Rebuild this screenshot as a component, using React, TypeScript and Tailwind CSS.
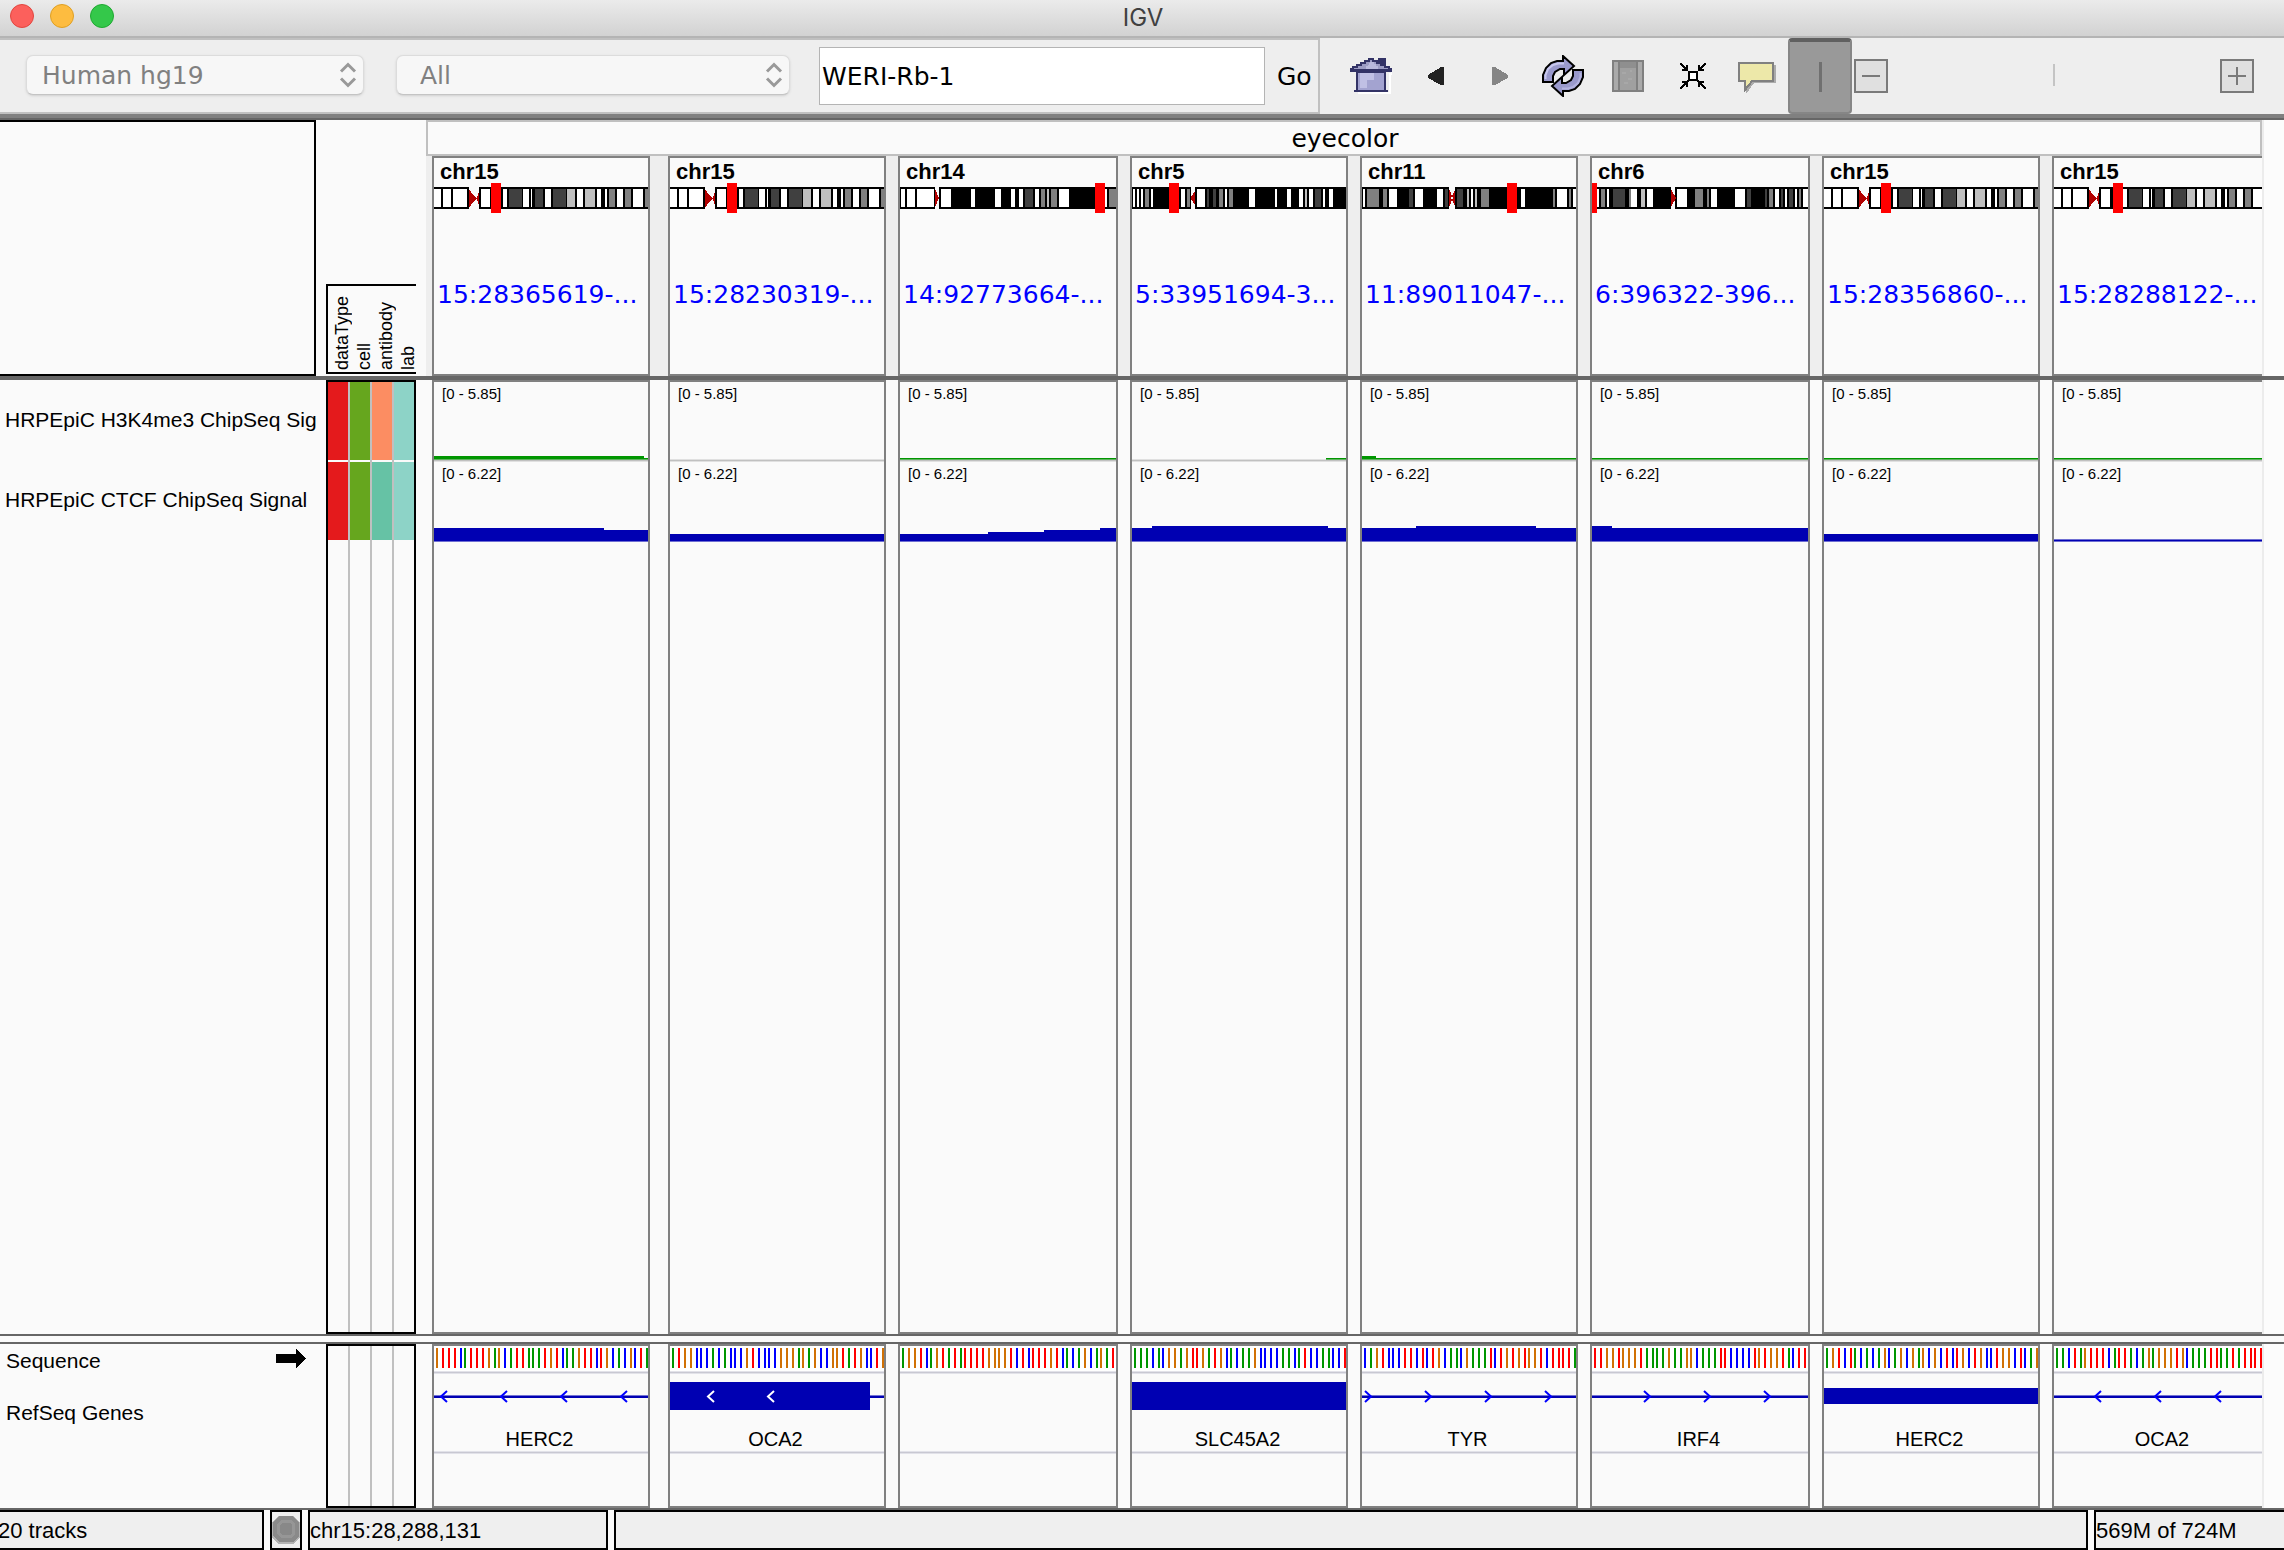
import React from "react";

type Band = [start: number, end: number, shade: string];

type Ideogram = {
  arms: [number, number][];
  centromere: string;
  bands: Band[];
  marker: [number, number];
};

type Gene = {
  name?: string;
  lines: [number, number][];
  block?: { from: number; to: number; height: number };
  direction?: "left" | "right";
  chevrons: number[];
  light?: boolean;
};

type Locus = {
  chr: string;
  locus: string;
  width: number;
  grow: string;
  ideogram: Ideogram;
  sequence: string;
  h3k4me3: [number, number, number][];
  ctcf: [number, number, number][];
  gene: Gene;
};

const W = "#ffffff";
const L = "#bfbfbf";
const G = "#808080";
const D = "#404040";

const chr15Bands: Band[] = [
  [0, 7, W], [9, 17, W], [19, 33, W], [47, 56, W], [69, 73, W], [75, 88, D], [89, 95, W], [97, 98, W],
  [101, 109, D], [111, 117, W], [119, 132, D], [133, 141, L], [143, 149, W], [151, 161, L], [163, 167, W],
  [171, 173, W], [175, 181, G], [183, 189, W], [191, 197, G], [199, 209, W], [211, 214, G],
];

const chr15 = (marker: number): Ideogram => ({
  arms: [[0, 35], [45, 216]],
  centromere: "M35 6L39 12L43 15L39 19L35 25ZM45 9L43 14V17L45 22Z",
  bands: chr15Bands,
  marker: [marker, marker + 10],
});

const chr14: Ideogram = {
  arms: [[0, 35], [39, 216]],
  centromere: "M35 6L39 15L35 24Z",
  bands: [
    [1, 5, W], [7, 15, W], [17, 34, W], [41, 51, W], [71, 75, W], [95, 101, W], [111, 115, W], [119, 123, W],
    [125, 133, D], [135, 139, W], [141, 145, G], [147, 149, L], [151, 157, G], [159, 169, W], [205, 207, W], [209, 216, G],
  ],
  marker: [195, 205],
};

const chr5: Ideogram = {
  arms: [[0, 59], [63, 214]],
  centromere: "M59 10L60 15L59 20ZM63 8L60 13V17L63 22Z",
  bands: [
    [1, 3, W], [5, 7, W], [9, 11, W], [13, 17, G], [19, 21, W], [49, 53, W], [55, 58, G], [65, 73, W], [75, 77, D],
    [81, 84, D], [87, 91, G], [93, 95, W], [97, 101, G], [117, 123, W], [143, 145, W], [155, 159, W], [167, 171, W],
    [173, 175, L], [177, 181, W], [183, 189, D], [191, 193, W], [197, 201, W],
  ],
  marker: [37, 47],
};

const chr11: Ideogram = {
  arms: [[0, 87], [93, 214]],
  centromere: "M87 6L91 15L87 24ZM93 7L89 15L93 23Z",
  bands: [
    [1, 3, W], [5, 17, G], [21, 25, G], [27, 35, W], [47, 51, D], [53, 61, W], [75, 81, W], [83, 86, D], [95, 101, D],
    [105, 107, L], [109, 111, W], [113, 115, L], [119, 127, G], [159, 163, W], [191, 193, G], [195, 205, W],
    [207, 209, G], [211, 214, W],
  ],
  marker: [145, 155],
};

const chr6: Ideogram = {
  arms: [[0, 79], [83, 216]],
  centromere: "M79 6L84 15L79 24Z",
  bands: [
    [5, 7, W], [9, 13, G], [15, 17, W], [21, 33, D], [37, 39, G], [39, 45, W], [49, 53, L], [55, 61, W], [85, 95, W],
    [103, 111, G], [115, 117, G], [119, 125, W], [143, 153, W], [155, 159, D], [173, 175, D], [177, 181, G],
    [183, 187, W], [189, 191, D], [193, 195, W], [197, 201, D], [203, 205, W], [207, 209, G], [211, 216, W],
  ],
  marker: [0, 5],
};

const loci: Locus[] = [
  {
    chr: "chr15", locus: "15:28365619-...", width: 214, grow: "grow-[214] mr-[6px]", ideogram: chr15(57),
    sequence: "GTTTCATTTGAGCATTAAATGTCAAGTTCTGCACGCTA",
    h3k4me3: [[0, 210, 3], [210, 214, 1]],
    ctcf: [[0, 170, 14], [170, 214, 12]],
    gene: { name: "HERC2", lines: [[0, 214]], direction: "left", chevrons: [7, 67, 127, 187] },
  },
  {
    chr: "chr15", locus: "15:28230319-...", width: 214, grow: "grow-[214]", ideogram: chr15(57),
    sequence: "ATGGCCCACACCCGTCCCCGGGAGAGCCGGTATGCCTG",
    h3k4me3: [],
    ctcf: [[0, 214, 8]],
    gene: { name: "OCA2", lines: [[200, 214]], block: { from: 0, to: 200, height: 28 }, direction: "left", chevrons: [38, 98], light: true },
  },
  {
    chr: "chr14", locus: "14:92773664-...", width: 216, grow: "grow-[216]", ideogram: chr14,
    sequence: "AGGTCAGTATATTTTGGGGTCTCTTTGTCACAGCAGAT",
    h3k4me3: [[0, 216, 1]],
    ctcf: [[0, 88, 8], [88, 144, 10], [144, 200, 12], [200, 216, 14]],
    gene: { lines: [], chevrons: [] },
  },
  {
    chr: "chr5", locus: "5:33951694-3...", width: 214, grow: "grow-[214]", ideogram: chr5,
    sequence: "AAACACGGAGTTGATGCACAAGCCCCAACATCCAACCT",
    h3k4me3: [[194, 214, 1]],
    ctcf: [[0, 20, 14], [20, 196, 16], [196, 214, 14]],
    gene: { name: "SLC45A2", lines: [], block: { from: 0, to: 214, height: 28 }, chevrons: [] },
  },
  {
    chr: "chr11", locus: "11:89011047-...", width: 214, grow: "grow-[214]", ideogram: chr11,
    sequence: "CAGTCCCTTCTCTGCAACGAAATCTGTGTGGTCTTTTA",
    h3k4me3: [[0, 14, 3], [14, 214, 1]],
    ctcf: [[0, 54, 14], [54, 174, 16], [174, 214, 14]],
    gene: { name: "TYR", lines: [[0, 214]], direction: "right", chevrons: [9, 69, 129, 189] },
  },
  {
    chr: "chr6", locus: "6:396322-396...", width: 216, grow: "grow-[216]", ideogram: chr6,
    sequence: "TTGGTGGGTAAAAGAAGGCAAATTCCCCTGTGGTACTT",
    h3k4me3: [[0, 216, 1]],
    ctcf: [[0, 20, 16], [20, 216, 14]],
    gene: { name: "IRF4", lines: [[0, 216]], direction: "right", chevrons: [58, 118, 178] },
  },
  {
    chr: "chr15", locus: "15:28356860-...", width: 214, grow: "grow-[214]", ideogram: chr15(57),
    sequence: "AGTCTACACAGCAGCGAGCGCTCTGCTGCCTGGCTCAG",
    h3k4me3: [[0, 214, 1]],
    ctcf: [[0, 214, 8]],
    gene: { name: "HERC2", lines: [], block: { from: 0, to: 214, height: 16 }, chevrons: [] },
  },
  {
    chr: "chr15", locus: "15:28288122-...", width: 208, grow: "grow-[208]", ideogram: chr15(59),
    sequence: "AACTAGTTTCATTACAGAGGGTGCAAATTAATATTTT",
    h3k4me3: [[0, 208, 1]],
    ctcf: [[0, 208, 3]],
    gene: { name: "OCA2", lines: [[0, 208]], direction: "left", chevrons: [41, 101, 161] },
  },
];

const baseColors: Record<string, string> = { A: "#009600", C: "#0000ff", G: "#d17105", T: "#ff0000" };

const attributes = [
  { name: "dataType", first: "bg-[#e41a1c]", second: "bg-[#e41a1c]" },
  { name: "cell", first: "bg-[#66a61e]", second: "bg-[#66a61e]" },
  { name: "antibody", first: "bg-[#fc8d62]", second: "bg-[#66c2a5]" },
  { name: "lab", first: "bg-[#8dd3c7]", second: "bg-[#8dd3c7]" },
];

function Chart({ width, height, className, children }: { width: number; height: number; className: string; children: React.ReactNode }) {
  return (
    <svg className={`block w-full shrink-0 ${className}`} viewBox={`0 0 ${width} ${height}`} preserveAspectRatio="none" shapeRendering="crispEdges" aria-hidden="true">
      {children}
    </svg>
  );
}

function panelClass(locus: Locus, i: number) {
  const right = i === loci.length - 1 ? "" : "border-r-2";
  return `flex min-w-0 basis-0 flex-col overflow-hidden border-y-2 border-l-2 border-[#808080] bg-[#fafafa] ${right} ${locus.grow}`;
}

function Ideo({ locus }: { locus: Locus }) {
  const { arms, centromere, bands, marker } = locus.ideogram;
  return (
    <Chart width={locus.width} height={30} className="h-[30px]">
      {arms.map(([a, b]) => <rect key={a} x={a} y={4} width={b - a} height={22} fill="#000" />)}
      {bands.map(([a, b, c]) => <rect key={a} x={a} y={6} width={b - a} height={18} fill={c} />)}
      <path d={centromere} fill="#b20000" />
      <rect x={marker[0]} y={0} width={marker[1] - marker[0]} height={30} fill="#f00" />
    </Chart>
  );
}

function Separator() {
  return <div className="h-[3px] shrink-0 border-y border-[#e2e2e9] bg-[#c8c8d2]" />;
}

function GeneGlyph({ locus }: { locus: Locus }) {
  const { lines, block, chevrons, direction, light } = locus.gene;
  const back = direction === "left" ? 6 : -6;
  return (
    <Chart width={locus.width} height={48} className="h-12">
      {lines.map(([a, b]) => (
        <g key={a}>
          <rect x={a} y={21} width={b - a} height={3} fill="#7373d4" />
          <rect x={a} y={22} width={b - a} height={2} fill="#0000b2" />
        </g>
      ))}
      {block && <rect x={block.from} y={22 - block.height / 2} width={block.to - block.from} height={block.height} fill="#0000b2" />}
      {chevrons.map((x) => (
        <path key={x} d={`M${x + back} 17L${x} 22.5L${x + back} 28`} fill="none" stroke={light ? "#fff" : "#0000ff"} strokeWidth={2} shapeRendering="auto" />
      ))}
    </Chart>
  );
}

function PaneRow({ className, names, attrs, children }: { className: string; names: React.ReactNode; attrs: React.ReactNode; children: React.ReactNode }) {
  return (
    <div className={`flex bg-[#fafafa] ${className}`}>
      <div className="flex w-[316px] shrink-0 flex-col overflow-hidden">{names}</div>
      <div className="mx-[10px] flex w-[90px] shrink-0 flex-col">{attrs}</div>
      {children}
      <div className="w-[22px] shrink-0 border-l-2 border-[#ececec] bg-[#fcfcfc]" />
    </div>
  );
}

function ToolButton({ label, className, children }: { label: string; className: string; children: React.ReactNode }) {
  return (
    <button type="button" aria-label={label} className={`flex shrink-0 items-center justify-center ${className}`}>
      {children}
    </button>
  );
}

function Picker({ label, value, className, text }: { label: string; value: string; className: string; text: string }) {
  return (
    <div className={`relative h-10 ${className}`}>
      <select
        aria-label={label}
        defaultValue={value}
        className={`block h-full w-full appearance-none rounded-[7px] border border-[#dcdcdc] border-b-[#c4c4c4] bg-[#f7f7f7] text-[25px] leading-[32px] text-[#808080] shadow-sm ${text}`}
      >
        <option>{value}</option>
      </select>
      <svg className="pointer-events-none absolute right-[7px] top-[7px] h-[26px] w-[18px]" viewBox="0 0 18 26" fill="none" stroke="#999" strokeWidth="3" aria-hidden="true">
        <path d="M2 9.500L9 2.500L16 9.500M2 16.500L9 23.500L16 16.500" />
      </svg>
    </div>
  );
}

const refreshArrow = "M1 27V20L4 13L9 8L15 6H21V1L32 11L22 20V14H18L13 17L11 21V27Z";
const refreshShine = "M3.500 24V20L6 14L11 10L16 8.500H22";

function Toolbar() {
  return (
    <div className="flex h-[76px] shrink-0 bg-[#eee]">
      <div className="flex w-[1320px] shrink-0 items-center border-y-2 border-r-2 border-[#c0c0c0] pl-[26px]">
        <Picker label="Genome" value="Human hg19" className="mb-[2px] w-[338px]" text="pl-[15px] pt-[2px]" />
        <Picker label="Chromosome" value="All" className="mb-[2px] ml-8 w-[394px]" text="pl-[23px] pt-[2px]" />
        <input
          aria-label="Locus"
          defaultValue="WERI-Rb-1"
          className="ml-[29px] h-[58px] w-[446px] border border-[#b4b4b4] bg-white px-[2px] text-[25px] text-black outline-none"
        />
        <button type="button" className="ml-3 pt-[2px] text-[25px] leading-[32px]">Go</button>
      </div>
      <ToolButton label="Home" className="ml-[30px] w-[42px]">
        <svg className="h-9 w-[42px]" viewBox="0 0 42 36" shapeRendering="crispEdges">
          <path d="M8 35H40V16H42V12" fill="none" stroke="#fff" strokeWidth="2" />
          <path d="M28 0H36V8H28Z" fill="#333366" />
          <path d="M0 10H2V8H6V6H10V4H14V2H18V0H24V2H28V4H32V6H36V8H40V10H42V14H0Z" fill="#333366" />
          <path d="M4 11H38V10H34V8H30V6H26V4H22V2H20V4H16V6H12V8H8V10H4Z" fill="#9c9cc4" />
          <path d="M20 4H24V6H26V8H28V11H16V8H18Z" fill="#b9b9dc" />
          <path d="M6 14H36V34H6Z" fill="#333366" />
          <path d="M8 15H34V32H8Z" fill="#a3a3d0" />
          <path d="M10 15H24V22H17V30H10Z" fill="#c0c0e4" />
          <path d="M4 32H38V34H4Z" fill="#333366" />
        </svg>
      </ToolButton>
      <ToolButton label="Back" className="ml-9 w-4">
        <svg className="h-[18px] w-4" viewBox="0 0 16 18" shapeRendering="crispEdges"><path d="M16 0V18H13L0 11V8L13 0Z" fill="#222" /></svg>
      </ToolButton>
      <ToolButton label="Forward" className="ml-12 w-4">
        <svg className="h-[18px] w-4" viewBox="0 0 16 18" shapeRendering="crispEdges"><path d="M0 0V18H3L16 11V8L3 0Z" fill="#858585" /></svg>
      </ToolButton>
      <ToolButton label="Refresh" className="ml-[34px] w-[42px]">
        <svg className="h-[42px] w-[42px]" viewBox="0 0 42 42" stroke="#000" strokeWidth="2" fill="#9999cc">
          <path d={refreshArrow} />
          <path d={refreshShine} fill="none" stroke="#c8c8ee" />
          <g transform="rotate(180 21 21)">
            <path d={refreshArrow} />
            <path d={refreshShine} fill="none" stroke="#b3b3e0" />
          </g>
        </svg>
      </ToolButton>
      <ToolButton label="Define region" className="ml-7 w-8">
        <svg className="h-8 w-8" viewBox="0 0 32 32" shapeRendering="crispEdges">
          <path d="M0 0H32V32H0Z" fill="#808080" />
          <path d="M2 2H6V30H2ZM26 2H30V30H26Z" fill="#aaa" />
          <path d="M8 2H24V8H8Z" fill="#8f8f8f" />
          <path d="M8 8H24V30H8Z" fill="#a0a0a0" />
          <path d="M10 12H14V14H10ZM16 18H20V20H16ZM12 22H16V24H12ZM18 10H20V12H18Z" fill="#a8a8a8" />
        </svg>
      </ToolButton>
      <ToolButton label="Collapse" className="ml-9 w-[26px]">
        <svg className="h-[26px] w-[26px]" viewBox="0 0 26 26" shapeRendering="crispEdges" fill="none" stroke="#000" strokeWidth="2">
          <path d="M0 0L8 8M26 0L18 8M0 26L8 18M26 26L18 18" />
          <path d="M7 2V7H2M19 2V7H24M7 24V19H2M19 24V19H24" />
          <rect x="9" y="9" width="8" height="8" fill="#fff" />
        </svg>
      </ToolButton>
      <ToolButton label="Popup text behaviour" className="ml-8 w-[38px] pt-1">
        <svg className="h-8 w-[38px]" viewBox="0 0 38 32" shapeRendering="crispEdges">
          <path d="M3 3H38V21H16L8 32V28Z" fill="#ababab" />
          <path d="M1 1H35V19H14L7 28V19H1Z" fill="#ede8a9" stroke="#808080" strokeWidth="2" />
        </svg>
      </ToolButton>
      <button type="button" aria-label="Center line" aria-pressed="true" className="ml-[12px] flex w-16 shrink-0 items-center justify-center rounded-[4px] border-2 border-t-4 border-[#868686] border-t-[#606060] bg-[#999]">
        <span className="h-[30px] w-[3px] bg-[#707070]" />
      </button>
      <div className="flex min-w-0 flex-1 items-center pl-[2px] pr-[30px]">
        <ToolButton label="Zoom out" className="h-[34px] w-[34px] border-2 border-[#7a7a7a] bg-[#e0e0e0]">
          <span className="h-[2px] w-[18px] bg-[#7a7a7a]" />
        </ToolButton>
        <div className="flex flex-1 justify-center"><span className="mb-[3px] h-[22px] w-[2px] bg-[#c4c4c4]" /></div>
        <ToolButton label="Zoom in" className="h-[34px] w-[34px] border-2 border-[#7a7a7a] bg-[#e0e0e0]">
          <svg className="h-[18px] w-[18px]" viewBox="0 0 18 18" shapeRendering="crispEdges"><path d="M0 8H8V0H10V8H18V10H10V18H8V10H0Z" fill="#7a7a7a" /></svg>
        </ToolButton>
      </div>
    </div>
  );
}

function AttributeColumns({ colored }: { colored?: boolean }) {
  return (
    <div className="flex flex-1 gap-[2px] border-2 border-black bg-[#c0c0c0]">
      {attributes.map((a) => (
        <div key={a.name} className="flex flex-1 flex-col gap-[2px] bg-[#fafafa]">
          {colored && <div className={`h-[78px] ${a.first}`} />}
          {colored && <div className={`h-[78px] ${a.second}`} />}
        </div>
      ))}
    </div>
  );
}

export default function App() {
  return (
    <div className="flex min-h-screen flex-col overflow-hidden bg-[#fafafa] font-['DejaVu_Sans',sans-serif] text-black">
      <header className="grid h-[38px] shrink-0 grid-cols-[1fr_auto_1fr] items-center border-b-2 border-[#b4b4b4] bg-linear-to-b from-[#ebebeb] to-[#d2d2d2]">
        <div className="flex gap-4 pb-1 pl-[10px]">
          <button type="button" aria-label="Close" className="h-6 w-6 rounded-full border border-[#e2463f] bg-[#fc605c]" />
          <button type="button" aria-label="Minimize" className="h-6 w-6 rounded-full border border-[#dfa023] bg-[#fdbc40]" />
          <button type="button" aria-label="Zoom" className="h-6 w-6 rounded-full border border-[#1fa931] bg-[#34c84a]" />
        </div>
        <h1 className="pl-[2px] font-['Inter',sans-serif] text-[24px] leading-[32px] text-[#404040]">IGV</h1>
      </header>

      <Toolbar />
      <div className="h-[6px] shrink-0 border-b-2 border-[#666] bg-[#808080]" />

      <PaneRow
        className="h-[256px] shrink-0"
        names={<div className="flex-1 border-y-2 border-r-2 border-black" />}
        attrs={
          <div className="mb-[2px] mt-[164px] flex flex-1 border-y-2 border-l-2 border-black pb-[2px] pl-[3px]">
            {attributes.map((a) => (
              <span key={a.name} className="w-[22px] shrink-0 rotate-180 font-['Liberation_Sans',sans-serif] text-[18px] leading-[22px] [writing-mode:vertical-rl]">
                {a.name}
              </span>
            ))}
          </div>
        }
      >
        <div className="flex min-w-0 flex-1 flex-col bg-[#eee]">
          <h2 className="border-2 border-[#c0c0c0] bg-[#fafafa] pl-[2px] pt-[2px] text-center text-[25px] leading-[30px]">eyecolor</h2>
          <div className="flex flex-1 gap-3 pl-[6px]">
            {loci.map((l, i) => (
              <section key={l.locus} className={panelClass(l, i)}>
                <h3 className="pl-[6px] pt-[3px] font-['Liberation_Sans',sans-serif] text-[22px] font-bold leading-[22px]">{l.chr}</h3>
                <Ideo locus={l} />
                <a href="#locus" className="mt-[67px] whitespace-nowrap pl-[3px] text-[25px] leading-[30px] text-[#0000ff]">{l.locus}</a>
              </section>
            ))}
          </div>
        </div>
      </PaneRow>
      <div className="h-1 shrink-0 bg-[#666]" />

      <PaneRow
        className="min-h-[200px] flex-1"
        names={
          <div className="whitespace-nowrap pl-[5px] font-['Liberation_Sans',sans-serif] text-[21px] leading-[80px]">
            <div>HRPEpiC H3K4me3 ChipSeq Signal</div>
            <div>HRPEpiC CTCF ChipSeq Signal</div>
          </div>
        }
        attrs={<AttributeColumns colored />}
      >
        <div className="flex min-w-0 flex-1 gap-3 pl-[6px] font-['Liberation_Sans',sans-serif] text-[15px] leading-[18px]">
          {loci.map((l, i) => (
            <section key={l.locus} className={panelClass(l, i)}>
              <div className="flex h-20 shrink-0 flex-col justify-between pt-[3px]">
                <span className="pl-2">[0 - 5.85]</span>
                <Chart width={l.width} height={8} className="h-2">
                  <rect x={0} y={5} width={l.width} height={3} fill="#e0e0e0" />
                  <rect x={0} y={6} width={l.width} height={1} fill="#c0c0c0" />
                  {l.h3k4me3.map(([a, b, h]) => (
                    <g key={a}>
                      <rect x={a} y={5 - h} width={b - a} height={h} fill="#009600" />
                      <rect x={a} y={5} width={b - a} height={1} fill="#5fb35f" />
                    </g>
                  ))}
                </Chart>
              </div>
              <div className="flex h-20 shrink-0 flex-col justify-between pt-[3px]">
                <span className="pl-2">[0 - 6.22]</span>
                <Chart width={l.width} height={16} className="h-4">
                  {l.ctcf.map(([a, b, h]) => (
                    <g key={a}>
                      <rect x={a} y={16 - h} width={b - a} height={h} fill="#6e6ed2" />
                      <rect x={a} y={h === 3 ? 14 : 16 - h} width={b - a} height={h === 3 ? 1 : h - 1} fill="#0000b2" />
                    </g>
                  ))}
                </Chart>
              </div>
            </section>
          ))}
        </div>
      </PaneRow>
      <div className="h-[10px] shrink-0 border-y-2 border-[#666]" />

      <PaneRow
        className="h-[164px] shrink-0"
        names={
          <div className="pl-[6px] pr-[10px] pt-[5px] font-['Liberation_Sans',sans-serif] text-[21px] leading-[24px]">
            <div className="flex items-start justify-between">
              <span>Sequence</span>
              <svg className="h-5 w-[30px]" viewBox="0 0 30 20" shapeRendering="crispEdges" aria-hidden="true"><path d="M0 5H20V0L30 9V10L20 19V14H0Z" /></svg>
            </div>
            <div className="mt-7">RefSeq Genes</div>
          </div>
        }
        attrs={<AttributeColumns />}
      >
        <div className="flex min-w-0 flex-1 gap-3 pl-[6px]">
          {loci.map((l, i) => (
            <section key={l.locus} className={panelClass(l, i)}>
              <div className="bg-white pb-[3px] pt-[2px]">
                <Chart width={l.width} height={20} className="h-5">
                  {l.sequence.split("").map((base, n) => (
                    <rect key={n} x={2 + 2 * Math.floor((n * 17) / 6 + 0.7)} y={0} width={2} height={20} fill={baseColors[base]} />
                  ))}
                </Chart>
              </div>
              <Separator />
              <GeneGlyph locus={l} />
              <div className={`mt-[5px] h-6 shrink-0 text-center font-['Liberation_Sans',sans-serif] text-[20px] leading-[24px] ${i === loci.length - 1 ? "pl-2" : "pr-[3px]"}`}>{l.gene.name}</div>
              <Separator />
            </section>
          ))}
        </div>
      </PaneRow>
      <div className="h-[2px] shrink-0 bg-[#666]" />

      <footer className="flex h-10 shrink-0 gap-[6px] whitespace-nowrap font-['Liberation_Sans',sans-serif] text-[22px] leading-[37px]">
        <div className="flex w-[264px] shrink-0 overflow-hidden border-y-2 border-r-2 border-black bg-[#efefef]">
          <span className="-ml-[2px]">20 tracks</span>
        </div>
        <div className="flex w-8 shrink-0 items-center justify-center border-2 border-black bg-[#efefef]">
          <svg className="h-7 w-7 shrink-0" viewBox="0 0 28 28" shapeRendering="crispEdges" aria-hidden="true">
            <path d="M6 0H22L28 7V21L22 28H6L0 21V7Z" fill="#b4b4b4" />
            <path d="M7 0H21L27 7V20L21 26H7L1 20V7Z" fill="#8a8a8a" />
            <path d="M9 4H19L23 8V18L19 22H9L5 18V8Z" fill="#969696" />
            <path d="M10 7H18L20 9V17L18 19H10L8 17V9Z" fill="#888" />
          </svg>
        </div>
        <div className="w-[300px] shrink-0 border-2 border-black bg-[#efefef]">chr15:28,288,131</div>
        <div className="min-w-0 flex-1 border-2 border-black bg-[#efefef]" />
        <div className="w-[190px] shrink-0 overflow-hidden border-y-2 border-l-2 border-black bg-[#efefef]">569M of 724M</div>
      </footer>
    </div>
  );
}
